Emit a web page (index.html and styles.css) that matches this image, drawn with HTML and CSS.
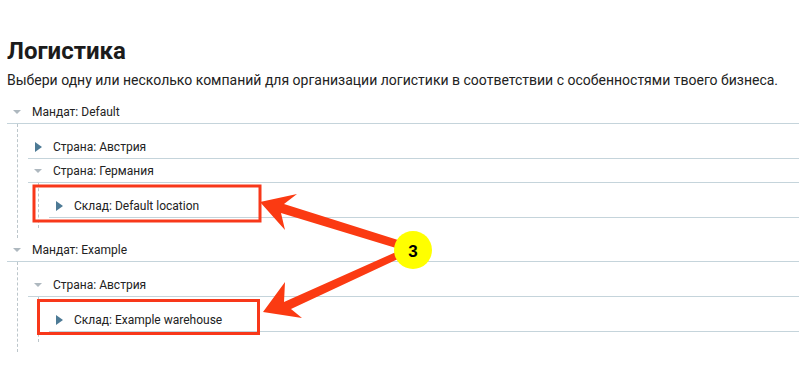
FILE: index.html
```html
<!DOCTYPE html>
<html lang="ru">
<head>
<meta charset="utf-8">
<link rel="stylesheet" href="styles.css">
</head>
<body>
<div class="page">
  <h1 class="title">Логистика</h1>
  <p class="lead">Выбери одну или несколько компаний для организации логистики в соответствии с особенностями твоего бизнеса.</p>
  <div class="tree">
    <div class="node">
      <div class="row"><span class="tw"><span class="tri-down"></span></span><span class="label">Мандат: Default</span></div>
      <div class="children">
        <div class="node">
          <div class="row"><span class="tw"><span class="tri-right"></span></span><span class="label">Страна: Австрия</span></div>
        </div>
        <div class="node">
          <div class="row"><span class="tw"><span class="tri-down"></span></span><span class="label">Страна: Германия</span></div>
          <div class="children">
            <div class="node">
              <div class="row"><span class="tw"><span class="tri-right"></span></span><span class="label">Склад: Default location</span></div>
            </div>
          </div>
        </div>
      </div>
    </div>
    <div class="node">
      <div class="row"><span class="tw"><span class="tri-down"></span></span><span class="label">Мандат: Example</span></div>
      <div class="children">
        <div class="node">
          <div class="row"><span class="tw"><span class="tri-down"></span></span><span class="label">Страна: Австрия</span></div>
          <div class="children">
            <div class="node">
              <div class="row"><span class="tw"><span class="tri-right"></span></span><span class="label">Склад: Example warehouse</span></div>
            </div>
          </div>
        </div>
      </div>
    </div>
  </div>
</div>
<svg class="annot" width="799" height="384" viewBox="0 0 799 384">
  <rect x="34" y="186" width="226" height="35" fill="none" stroke="#f8381a" stroke-width="3"/>
  <rect x="38.5" y="300.5" width="220" height="33" fill="none" stroke="#f8381a" stroke-width="3"/>
  <polygon points="260,202 297,194 284,204 398,240 396,248 281,213 285,230" fill="#fb3a12"/>
  <polygon points="263,312 285,282 284,302 396,252 398,259 291,309 302,318" fill="#fb3a12"/>
  <circle cx="413" cy="250" r="19" fill="#ffff00"/>
  <text x="413" y="256.5" class="badge-num" text-anchor="middle">3</text>
</svg>
</body>
</html>
```
FILE: styles.css
```css
html, body {
  margin: 0;
  padding: 0;
  background: #ffffff;
}
body {
  font-family: Roboto, "Noto Sans", Arial, sans-serif;
  color: #222222;
  position: relative;
  width: 799px;
  height: 384px;
  overflow: hidden;
}
.page {
  padding: 37px 0 0 7px;
}
.title {
  margin: 0;
  font-size: 24px;
  line-height: 28px;
  font-weight: 700;
  color: #1b1b1b;
}
.lead {
  margin: 7px 0 12px 0;
  font-size: 14px;
  line-height: 16px;
  color: #222222;
}
.row {
  display: flex;
  align-items: center;
  height: 23px;
  border-bottom: 1px solid #c5d4db;
  padding-left: 6px;
  font-size: 12px;
  line-height: 23px;
}
.tw {
  width: 19px;
  height: 23px;
  display: flex;
  align-items: center;
}
.tri-down {
  width: 0;
  height: 0;
  border-left: 4px solid transparent;
  border-right: 4px solid transparent;
  border-top: 4px solid #aeb8bf;
}
.tri-right {
  margin-left: 1px;
  width: 0;
  height: 0;
  border-top: 5px solid transparent;
  border-bottom: 5px solid transparent;
  border-left: 7px solid #4d7a95;
}
.label {
  color: #222222;
  padding-top: 1px;
}
.children {
  margin-left: 10px;
  border-left: 1px dashed #bcc6cb;
  padding: 11px 0 10px 10px;
}
.annot {
  position: absolute;
  left: 0;
  top: 0;
}
.badge-num {
  font-family: "Liberation Sans", Arial, sans-serif;
  font-weight: 700;
  font-size: 17px;
  fill: #000000;
}
```
